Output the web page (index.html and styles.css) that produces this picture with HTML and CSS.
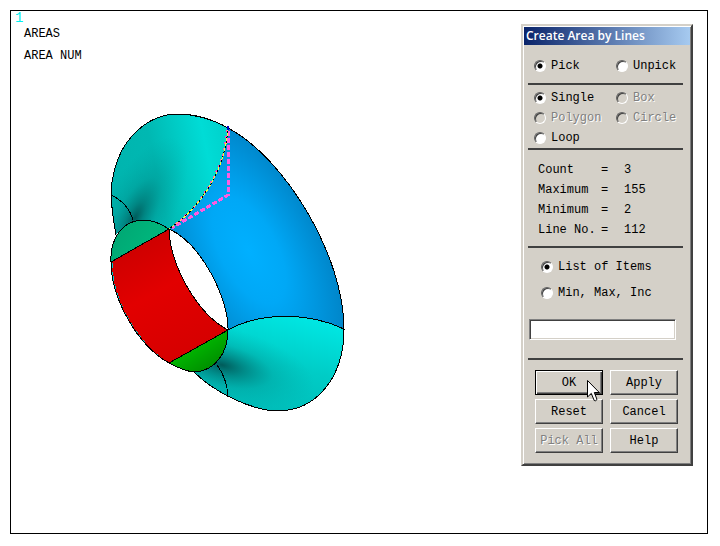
FILE: index.html
```html
<!DOCTYPE html>
<html lang="en">
<head>
<meta charset="utf-8">
<title>Create Area by Lines</title>
<link rel="stylesheet" href="styles.css">
</head>
<body>
<div class="frame">
  <main class="viewport">
    <div class="window-no">1</div>
    <div class="caption">AREAS</div>
    <div class="caption">AREA NUM</div>
    <svg class="model" viewBox="100 100 260 320" role="img" aria-label="Torus model">
      <defs>
        <linearGradient id="lobeTop" gradientUnits="userSpaceOnUse" x1="112" y1="190" x2="228" y2="165">
          <stop offset="0" stop-color="#00b4ae"/><stop offset=".4" stop-color="#00b8b2"/><stop offset=".85" stop-color="#00dcd6"/><stop offset="1" stop-color="#00d4ce"/>
        </linearGradient>
        <radialGradient id="shadeTop" gradientUnits="userSpaceOnUse" cx="0" cy="0" r="1" gradientTransform="translate(135 218) rotate(-62) scale(90 36)">
          <stop offset="0" stop-color="#004c4c" stop-opacity=".85"/><stop offset=".2" stop-color="#005c5c" stop-opacity=".55"/><stop offset=".5" stop-color="#007070" stop-opacity=".22"/><stop offset="1" stop-color="#008c8c" stop-opacity="0"/>
        </radialGradient>
        <linearGradient id="lobeBottom" gradientUnits="userSpaceOnUse" x1="290" y1="315" x2="265" y2="412">
          <stop offset="0" stop-color="#00e6e2"/><stop offset=".5" stop-color="#00ccc6"/><stop offset="1" stop-color="#00bcb8"/>
        </linearGradient>
        <radialGradient id="shadeBottom" gradientUnits="userSpaceOnUse" cx="0" cy="0" r="1" gradientTransform="translate(222 365) rotate(14) scale(95 38)">
          <stop offset="0" stop-color="#004848" stop-opacity=".85"/><stop offset=".25" stop-color="#005c5c" stop-opacity=".55"/><stop offset=".55" stop-color="#007070" stop-opacity=".2"/><stop offset="1" stop-color="#008c8c" stop-opacity="0"/>
        </radialGradient>
        <radialGradient id="blue" gradientUnits="userSpaceOnUse" cx="0" cy="0" r="1" gradientTransform="translate(249 251) rotate(62) scale(165 80)">
          <stop offset="0" stop-color="#00b0ff"/><stop offset=".35" stop-color="#00a8f6"/><stop offset="1" stop-color="#0080c2"/>
        </radialGradient>
        <linearGradient id="red" gradientUnits="userSpaceOnUse" x1="125" y1="245" x2="185" y2="355">
          <stop offset="0" stop-color="#cc0000"/><stop offset=".45" stop-color="#e20000"/><stop offset="1" stop-color="#d60000"/>
        </linearGradient>
        <linearGradient id="greenTop" gradientUnits="userSpaceOnUse" x1="118" y1="230" x2="150" y2="250">
          <stop offset="0" stop-color="#00a874"/><stop offset="1" stop-color="#00b67c"/>
        </linearGradient>
        <linearGradient id="greenBottom" gradientUnits="userSpaceOnUse" x1="190" y1="350" x2="205" y2="374">
          <stop offset="0" stop-color="#00b400"/><stop offset="1" stop-color="#008c00"/>
        </linearGradient>
      </defs>
      <path fill="url(#lobeTop)" d="M228 128C209 117 192 114 176 114C151 115 133 131 122 150C113 168 111 182 111 196C112 211 114 224 116 235C128 220 145 217 169 229C199 209 225 173 228 128Z"/>
      <path fill="url(#shadeTop)" d="M228 128C209 117 192 114 176 114C151 115 133 131 122 150C113 168 111 182 111 196C112 211 114 224 116 235C128 220 145 217 169 229C199 209 225 173 228 128Z"/>
      <path fill="url(#blue)" d="M228 128C285 158 344 256 344 329C306 311 258 313 228 330C229 299 201 243 169 229C199 209 225 173 228 128Z"/>
      <path fill="url(#lobeBottom)" d="M228 330C258 313 306 311 344 329C344 377 317 411 277 411C250 410 214 392 194 372C215 370 228 350 228 330Z"/>
      <path fill="url(#shadeBottom)" d="M228 330C258 313 306 311 344 329C344 377 317 411 277 411C250 410 214 392 194 372C215 370 228 350 228 330Z"/>
      <path fill="url(#greenTop)" d="M111 262C110 239 122 220 144 220Q155 220 169 229Z"/>
      <path fill="url(#red)" d="M111 262L169 229C170 264 196 313 228 330L169 363C137 345 111 298 111 262Z"/>
      <path fill="url(#greenBottom)" d="M228 330L169 363Q184 371 194 372C216 371 228 352 228 330Z"/>
      <path class="fringe" d="M112 263C112 298 136 342 166 361"/>
      <g class="edges">
        <path d="M228 128C209 117 192 114 176 114C151 115 133 131 122 150C113 168 111 182 111 196C112 211 114 224 116 235M111 195Q128 203 133 220"/>
        <path d="M228 128C285 158 344 256 344 329C306 311 258 313 228 330C229 299 201 243 169 229"/>
        <path d="M344 329C344 377 317 411 277 411C250 410 214 392 194 372M217 365Q227 378 228 397"/>
        <path d="M111 262C110 239 122 220 144 220Q155 220 169 229L111 262C111 298 137 345 169 363L228 330C196 313 170 264 169 229"/>
        <path d="M169 363Q184 371 194 372C216 371 228 352 228 330"/>
      </g>
      <path class="rubber" d="M228 131V195L172 228"/>
      <path class="pick-magenta" d="M227 130C224 173 198 209 169 229"/>
      <path class="pick-black" d="M228 128C225 173 199 209 169 229"/>
      <path class="pick-yellow" d="M228 128C225 173 199 209 169 229"/>
      <path class="pick-end" d="M228 126V130"/>
    </svg>
  </main>

  <form class="dialog">
    <h1 class="title">Create Area by Lines</h1>
    <div class="body">
      <div class="group pick" role="radiogroup" aria-label="Pick mode">
        <label><input type="radio" name="mode" checked>Pick</label>
        <label><input type="radio" name="mode">Unpick</label>
      </div>
      <hr>
      <div class="group shape" role="radiogroup" aria-label="Pick shape">
        <label><input type="radio" name="shape" checked>Single</label>
        <label class="off"><input type="radio" name="shape" disabled>Box</label>
        <label class="off"><input type="radio" name="shape" disabled>Polygon</label>
        <label class="off"><input type="radio" name="shape" disabled>Circle</label>
        <label><input type="radio" name="shape">Loop</label>
      </div>
      <hr>
      <dl class="stats">
        <dt>Count</dt><dd>=</dd><dd>3</dd>
        <dt>Maximum</dt><dd>=</dd><dd>155</dd>
        <dt>Minimum</dt><dd>=</dd><dd>2</dd>
        <dt>Line No.</dt><dd>=</dd><dd>112</dd>
      </dl>
      <hr>
      <div class="entry" role="radiogroup" aria-label="Entry type">
        <label><input type="radio" name="entry" checked>List of Items</label>
        <label><input type="radio" name="entry">Min, Max, Inc</label>
      </div>
      <input class="field" type="text" aria-label="Items">
      <hr>
      <div class="buttons">
        <button type="button" class="default">OK</button>
        <button type="button">Apply</button>
        <button type="button">Reset</button>
        <button type="button">Cancel</button>
        <button type="button" disabled>Pick All</button>
        <button type="button">Help</button>
      </div>
    </div>
    <svg class="pointer" viewBox="0 0 13 22" aria-hidden="true">
      <path d="M.5 .5V17L4.300 13.400L7.200 20.500Q8.500 21.500 10 19.500L7.300 12.500H12.300Z"/>
    </svg>
  </form>
</div>
</body>
</html>
```
FILE: styles.css
```css
* {
  box-sizing: border-box;
}

body {
  margin: 0;
  min-height: 100vh;
  padding: 10px 12px 12px 10px;
  display: flex;
  background: #fff;
  color: #000;
  font: 12px/20px "Liberation Mono", monospace;
}

.frame {
  flex: 1;
  display: flex;
  align-items: flex-start;
  border: 1px solid #000;
}

.viewport {
  flex: 1;
  padding: 0 4px;
}

.window-no {
  color: #00f0f0;
  font-size: 14px;
  line-height: 14px;
}

.caption {
  padding-left: 9px;
  line-height: 22px;
}

.caption:first-of-type,
.window-no + .caption {
  margin-top: -2px;
}

.model {
  display: block;
  width: 260px;
  margin: 33px 0 0 85px;
}

.model path {
  shape-rendering: crispEdges;
}

.edges path,
.fringe,
.rubber,
.pick-magenta,
.pick-black,
.pick-yellow,
.pick-end {
  fill: none;
}

.edges {
  stroke: #000;
}

.fringe {
  stroke: #00c8c8;
  stroke-dasharray: 5 4 9 3;
}

.rubber {
  stroke: #ff5ce0;
  stroke-width: 3;
  stroke-dasharray: 5 2;
}

.pick-magenta {
  stroke: #ff40d0;
  stroke-width: 2;
  stroke-dasharray: 2 4;
}

.pick-black {
  stroke: #000;
}

.pick-yellow {
  stroke: #ffff30;
  stroke-dasharray: 3 2;
}

.pick-end {
  stroke: #0000c0;
  stroke-width: 2;
}

.dialog {
  position: relative;
  flex: none;
  width: 172px;
  margin: 13px 14px 0 0;
  padding: 1px;
  background: #d4d0c8;
  border: 2px solid;
  border-color: #d4d0c8 #404040 #404040 #d4d0c8;
  box-shadow: inset 1px 1px #fff, inset -1px -1px #808080;
}

.title {
  margin: 0;
  padding-left: 2px;
  background: linear-gradient(90deg, #0a246a, #a6caf0);
  color: #fff;
  font: 600 12px/18px "Open Sans", "Noto Sans", sans-serif;
}

.body {
  padding: 0 7px 10px 4px;
}

hr {
  height: 2px;
  margin: 0;
  border: 0;
  background: #404040;
}

.group {
  display: grid;
  grid-template-columns: 82px 1fr;
  padding-left: 6px;
}

.pick {
  padding-top: 11px;
  padding-bottom: 7px;
}

.shape {
  padding-top: 3px;
}

label {
  display: flex;
  align-items: center;
  gap: 5px;
  white-space: nowrap;
}

.off,
button:disabled {
  color: #808080;
  text-shadow: 1px 1px #fff;
}

input[type="radio"] {
  appearance: none;
  flex: none;
  width: 12px;
  height: 12px;
  margin: 0;
  border: 1px solid;
  border-color: #606060 #fff #fff #606060;
  border-radius: 50%;
  background: #fff;
  box-shadow: inset 1px 1px #404040;
}

input[type="radio"]:checked {
  background: radial-gradient(circle, #000 2px, #fff 3px);
}

input[type="radio"]:disabled {
  background: #d4d0c8;
}

.stats {
  display: grid;
  grid-template-columns: 63px 23px 1fr;
  margin: 0;
  padding: 10px 0 6px 10px;
}

.stats dd {
  margin: 0;
}

.entry {
  padding: 6px 0 0 13px;
  line-height: 26px;
}

.field {
  display: block;
  width: calc(100% - 8px);
  height: 21px;
  margin: 13px 0 18px 1px;
  padding: 0 3px;
  background: #fff;
  border: 1px solid;
  border-color: #808080 #fff #fff #808080;
  box-shadow: inset 1px 1px #404040, inset -1px -1px #d4d0c8;
  font: inherit;
}

.buttons {
  display: grid;
  grid-template-columns: 1fr 1fr;
  gap: 4px 7px;
  padding: 10px 5px 0 7px;
}

button {
  height: 25px;
  padding: 0;
  background: #d4d0c8;
  border: 1px solid;
  border-color: #fff #404040 #404040 #fff;
  border-radius: 0;
  box-shadow: inset -1px -1px #808080;
  color: #000;
  font: inherit;
}

.default {
  border-color: #000;
  box-shadow: inset 1px 1px #fff, inset -1px -1px #404040, inset -2px -2px #808080;
}

.pointer {
  position: absolute;
  left: 64px;
  top: 354px;
  width: 13px;
  height: 22px;
}

.pointer path {
  fill: #fff;
  stroke: #000;
}
```
